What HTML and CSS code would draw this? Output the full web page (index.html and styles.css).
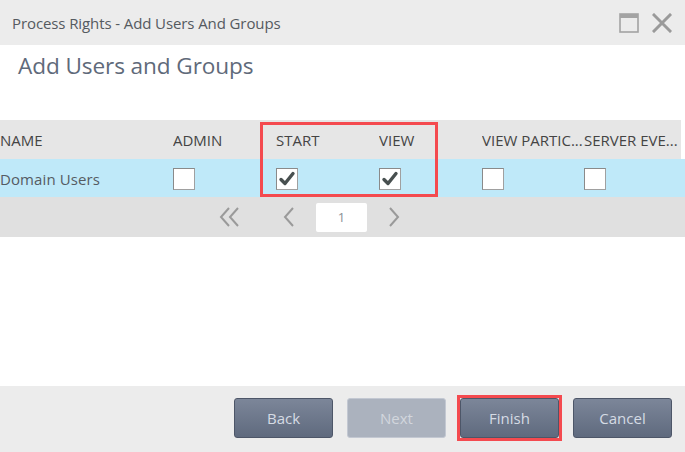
FILE: index.html
```html
<!DOCTYPE html>
<html>
<head>
<meta charset="utf-8">
<link rel="stylesheet" href="styles.css">
</head>
<body>
<div class="dialog">
  <div class="titlebar">
    <span class="title">Process Rights - Add Users And Groups</span>
    <div class="win-btns">
      <svg class="ico-max" width="20" height="20" viewBox="0 0 20 20"><rect x="1" y="1" width="18" height="18" fill="none" stroke="#a3a3a3" stroke-width="1.6"/><rect x="1" y="1" width="18" height="4" fill="#a3a3a3"/></svg>
      <svg class="ico-close" width="20" height="20" viewBox="0 0 20 20"><path d="M2 2 L18 18 M18 2 L2 18" stroke="#9a9a9a" stroke-width="3" stroke-linecap="square"/></svg>
    </div>
  </div>
  <div class="content">
    <h1 class="heading">Add Users and Groups</h1>
  </div>
  <div class="table">
    <div class="thead">
      <div class="c name">NAME</div>
      <div class="c">ADMIN</div>
      <div class="c">START</div>
      <div class="c">VIEW</div>
      <div class="c">VIEW PARTIC...</div>
      <div class="c">SERVER EVE...</div>
    </div>
    <div class="trow">
      <div class="c name">Domain Users</div>
      <div class="c"><span class="cb"></span></div>
      <div class="c"><span class="cb"><svg width="18" height="18" viewBox="0 0 18 18"><path d="M3 9.5 L7 13.5 L15 3.5" fill="none" stroke="#485050" stroke-width="3.4" stroke-linecap="round" stroke-linejoin="round"/></svg></span></div>
      <div class="c"><span class="cb"><svg width="18" height="18" viewBox="0 0 18 18"><path d="M3 9.5 L7 13.5 L15 3.5" fill="none" stroke="#485050" stroke-width="3.4" stroke-linecap="round" stroke-linejoin="round"/></svg></span></div>
      <div class="c"><span class="cb"></span></div>
      <div class="c"><span class="cb"></span></div>
    </div>
    <div class="pager">
      <svg class="pg first" width="22" height="22" viewBox="0 0 22 22"><path d="M10 2 L2 11 L10 20 M19 2 L11 11 L19 20" fill="none" stroke="#9a9a9a" stroke-width="2"/></svg>
      <svg class="pg prev" width="14" height="22" viewBox="0 0 14 22"><path d="M11 2 L3 11 L11 20" fill="none" stroke="#9a9a9a" stroke-width="2"/></svg>
      <div class="page">1</div>
      <svg class="pg next" width="14" height="22" viewBox="0 0 14 22"><path d="M3 2 L11 11 L3 20" fill="none" stroke="#9a9a9a" stroke-width="2"/></svg>
    </div>
    <div class="highlight"></div>
  </div>
  <div class="spacer"></div>
  <div class="footer">
    <button class="btn">Back</button>
    <button class="btn disabled">Next</button>
    <button class="btn marked">Finish</button>
    <button class="btn">Cancel</button>
  </div>
</div>
</body>
</html>
```

FILE: styles.css
```css
html, body {
  margin: 0;
  padding: 0;
  background: #ffffff;
}
body {
  font-family: "Open Sans", "Liberation Sans", sans-serif;
}
.dialog {
  width: 685px;
  height: 452px;
  display: flex;
  flex-direction: column;
  overflow: hidden;
}
.titlebar {
  height: 45px;
  flex: none;
  background: #ececec;
  display: flex;
  align-items: center;
  justify-content: space-between;
  padding: 0 13px 0 12px;
}
.title {
  font-size: 15px;
  color: #555a60;
  letter-spacing: -0.1px;
}
.win-btns {
  display: flex;
  gap: 13px;
  align-items: center;
  padding-top: 1px;
}
.content {
  height: 75px;
  flex: none;
}
.heading {
  margin: 0;
  padding: 6px 0 0 18px;
  font-size: 22.6px;
  font-weight: 400;
  color: #5f6a7a;
  line-height: 30px;
  letter-spacing: -0.1px;
}
.table {
  position: relative;
  flex: none;
}
.thead, .trow {
  display: grid;
  grid-template-columns: 173px 103px 103px 103px 102px 100px;
  align-items: center;
  overflow: hidden;
}
.thead {
  height: 39px;
  background: #e6e6e6;
  width: 681px;
  font-size: 15px;
  color: #444;
}
.trow {
  height: 38px;
  background: #bfe9f9;
  font-size: 15px;
  color: #555;
}
.c {
  white-space: nowrap;
  overflow: hidden;
  display: flex;
  align-items: center;
}
.trow .name {
  color: #555b63;
  letter-spacing: 0.1px;
  padding-top: 1px;
}
.cb {
  width: 20px;
  height: 20px;
  background: #fff;
  border: 1px solid #8a8a8a;
  border-right-color: #a0a0a0;
  border-bottom-color: #a0a0a0;
  display: flex;
  align-items: center;
  justify-content: center;
  margin-top: 2px;
}
.pager {
  height: 40px;
  background: #e0e0e0;
  display: flex;
  align-items: center;
}
.pg.first { margin-left: 219px; }
.pg.prev { margin-left: 41px; }
.page {
  margin-left: 20px;
  width: 51px;
  height: 29px;
  background: #fff;
  border-radius: 2px;
  color: #8a8f96;
  font-size: 13px;
  display: flex;
  align-items: center;
  justify-content: center;
}
.pg.next { margin-left: 20px; }
.highlight {
  position: absolute;
  left: 260px;
  top: 2px;
  width: 172px;
  height: 69px;
  border: 3px solid #f44a4f;
}
.spacer {
  flex: 1;
}
.footer {
  height: 66px;
  flex: none;
  background: #ececec;
  display: flex;
  justify-content: flex-end;
  align-items: flex-start;
  gap: 14px;
  padding: 12px 13px 0 0;
  box-sizing: border-box;
}
.btn {
  position: relative;
  width: 99px;
  height: 40px;
  border: 1px solid #4d5668;
  border-radius: 3px;
  background: linear-gradient(#7c8699, #5f6a7e);
  color: #d5dbe4;
  font-family: "Open Sans", "Liberation Sans", sans-serif;
  font-size: 15px;
  padding: 0;
}
.btn.disabled {
  background: #abb2be;
  border-color: #c3c8d2;
  color: #d2d6dd;
}
.btn.marked::after {
  content: "";
  position: absolute;
  left: -4px;
  top: -4px;
  right: -4px;
  bottom: -4px;
  border: 3px solid #f44a4f;
}
```
